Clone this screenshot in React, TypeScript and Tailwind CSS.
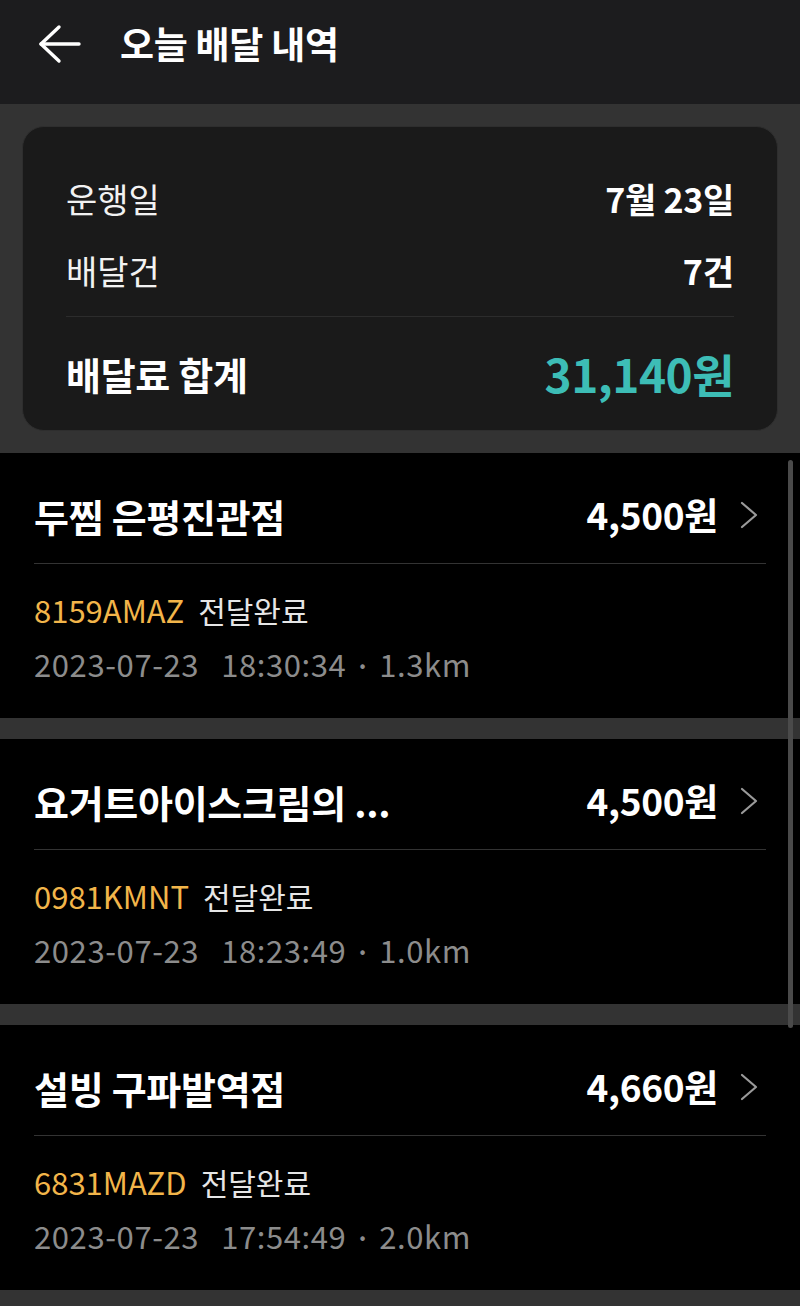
import React from "react";

type Delivery = {
  store: string;
  fee: string;
  code: string;
  date: string;
  time: string;
  distance: string;
};

const deliveries: Delivery[] = [
  { store: "두찜 은평진관점", fee: "4,500원", code: "8159AMAZ", date: "2023-07-23", time: "18:30:34", distance: "1.3km" },
  { store: "요거트아이스크림의 ...", fee: "4,500원", code: "0981KMNT", date: "2023-07-23", time: "18:23:49", distance: "1.0km" },
  { store: "설빙 구파발역점", fee: "4,660원", code: "6831MAZD", date: "2023-07-23", time: "17:54:49", distance: "2.0km" },
];

function BackArrow() {
  return (
    <svg width="44" height="40" viewBox="0 0 44 40" fill="none" stroke="#ffffff" strokeWidth="3.4" strokeLinecap="round" strokeLinejoin="round">
      <path d="M3 20 H41" />
      <path d="M21 3 L3 20 L21 37" />
    </svg>
  );
}

function Chevron() {
  return (
    <svg width="18" height="28" viewBox="0 0 18 28" fill="none" stroke="#9a9a9a" strokeWidth="2.2" strokeLinecap="round" strokeLinejoin="round">
      <path d="M2 2 L16 14 L2 26" />
    </svg>
  );
}

function DeliveryCard({ d }: { d: Delivery }) {
  return (
    <li className="bg-black px-[34px] pb-[31px]">
      <div className="flex h-[110px] items-center justify-between pt-[14px]">
        <span className="text-[38px] font-bold tracking-[-0.3px] text-white">{d.store}</span>
        <div className="flex items-center gap-[22px]">
          <span className="text-[37px] font-bold tracking-[-0.3px] text-white">{d.fee}</span>
          <span className="mr-[8px] flex items-center">
            <Chevron />
          </span>
        </div>
      </div>
      <div className="h-px bg-[#333333]" />
      <p className="mt-[23px] flex h-[46px] items-center text-[31px]">
        <span className="text-[#f2b54a]">{d.code}</span>
        <span className="ml-[14px] text-[30px] text-[#e6e6e6]">전달완료</span>
      </p>
      <p className="mt-[8px] flex h-[46px] items-center text-[31px] tracking-[0.6px] text-[#8c8c8c]">
        <span>{d.date}</span>
        <span className="ml-[22px]">{d.time}</span>
        <span className="mx-[13px] text-[18px]">•</span>
        <span>{d.distance}</span>
      </p>
    </li>
  );
}

export default function App() {
  return (
    <div
      className="relative min-h-[1306px] w-[800px] overflow-hidden bg-[#333333]"
      style={{ fontFamily: '"Noto Sans CJK KR", "Noto Sans", sans-serif' }}
    >
      <header className="flex h-[104px] items-center bg-[#1c1c1e] pb-[16px] pl-[38px]">
        <BackArrow />
        <h1 className="ml-[38px] text-[37px] font-bold tracking-[-0.3px] text-white">오늘 배달 내역</h1>
      </header>

      <section className="px-[22px] py-[22px]">
        <div className="rounded-[22px] border border-[#2e2e2e] bg-[#1a1a1a] px-[43px] pt-[35px]">
          <div className="flex h-[72px] items-center justify-between">
            <span className="text-[34px] text-[#f2f2f2]">운행일</span>
            <span className="text-[34px] font-bold tracking-[-0.3px] text-white">7월 23일</span>
          </div>
          <div className="flex h-[72px] items-center justify-between">
            <span className="text-[34px] text-[#f2f2f2]">배달건</span>
            <span className="text-[34px] font-bold text-white">7건</span>
          </div>
          <div className="mt-[10px] h-px bg-[#2c2c2c]" />
          <div className="flex h-[113px] items-center justify-between">
            <span className="text-[38px] font-bold tracking-[-0.3px] text-white">배달료 합계</span>
            <span className="text-[46px] font-bold tracking-[-0.5px] text-[#3dbdb6]">31,140원</span>
          </div>
        </div>
      </section>

      <ul className="flex flex-col gap-[21px]">
        {deliveries.map((d) => (
          <DeliveryCard key={d.code} d={d} />
        ))}
      </ul>

      <div className="absolute left-[788px] top-[460px] h-[568px] w-[5px] rounded-full bg-[#4a4a4a]" />
    </div>
  );
}
